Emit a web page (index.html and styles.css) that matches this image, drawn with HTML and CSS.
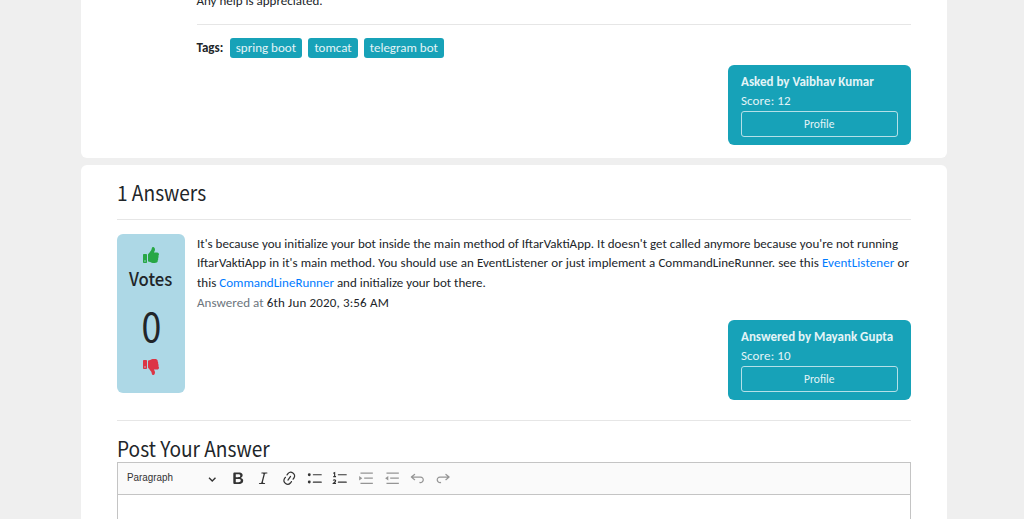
FILE: index.html
```
<!DOCTYPE html>
<html lang="en">
<head>
<meta charset="utf-8">
<title>Question</title>
<link rel="stylesheet" href="styles.css">
</head>
<body>
<main class="page">
  <section class="card question">
    <p class="text clip"><span class="l0">Any help is appreciated.</span></p>
    <hr class="rule">
    <div class="tags"><b class="tags-label">Tags:</b><span class="tag t1">spring boot</span><span class="tag t2">tomcat</span><span class="tag t3">telegram bot</span></div>
    <div class="user">
      <b class="n1">Asked by Vaibhav Kumar</b>
      <span class="score">Score: 12</span>
      <a class="profile">Profile</a>
    </div>
  </section>
  <section class="card answers">
    <h2 class="heading">1 Answers</h2>
    <hr class="rule">
    <div class="answer">
      <div class="votes">
        <svg class="thumb up" viewBox="0 0 512 512"><path d="M104 224H24c-13.255 0-24 10.745-24 24v240c0 13.255 10.745 24 24 24h80c13.255 0 24-10.745 24-24V248c0-13.255-10.745-24-24-24zM64 472c-13.255 0-24-10.745-24-24s10.745-24 24-24 24 10.745 24 24-10.745 24-24 24zM384 81.452c0 42.416-25.97 66.208-33.277 94.548h101.723c33.397 0 59.397 27.746 59.553 58.098.084 17.938-7.546 37.249-19.439 49.197l-.11.11c9.836 23.337 8.237 56.037-9.308 79.469 8.681 25.895-.069 57.704-16.382 74.757 4.298 17.598 2.244 32.575-6.148 44.632C440.202 511.587 389.616 512 346.839 512l-2.845-.001c-48.287-.017-87.806-17.598-119.56-31.725-15.957-7.099-36.821-15.887-52.651-16.178-6.54-.12-11.783-5.457-11.783-11.998v-213.77c0-3.2 1.282-6.271 3.558-8.521 39.614-39.144 56.648-80.587 89.117-113.111 14.804-14.832 20.188-37.236 25.393-58.902C282.515 39.293 291.817 0 312 0c24 0 72 8 72 81.452z"/></svg>
        <span class="votes-label">Votes</span>
        <span class="count">0</span>
        <svg class="thumb down" viewBox="0 0 512 512"><path d="M0 56v240c0 13.255 10.745 24 24 24h80c13.255 0 24-10.745 24-24V56c0-13.255-10.745-24-24-24H24C10.745 32 0 42.745 0 56zm40 200c0-13.255 10.745-24 24-24s24 10.745 24 24-10.745 24-24 24-24-10.745-24-24z"/><path transform="matrix(1 0 0 -1 0 512)" d="M384 81.452c0 42.416-25.97 66.208-33.277 94.548h101.723c33.397 0 59.397 27.746 59.553 58.098.084 17.938-7.546 37.249-19.439 49.197l-.11.11c9.836 23.337 8.237 56.037-9.308 79.469 8.681 25.895-.069 57.704-16.382 74.757 4.298 17.598 2.244 32.575-6.148 44.632C440.202 511.587 389.616 512 346.839 512l-2.845-.001c-48.287-.017-87.806-17.598-119.56-31.725-15.957-7.099-36.821-15.887-52.651-16.178-6.54-.12-11.783-5.457-11.783-11.998v-213.77c0-3.2 1.282-6.271 3.558-8.521 39.614-39.144 56.648-80.587 89.117-113.111 14.804-14.832 20.188-37.236 25.393-58.902C282.515 39.293 291.817 0 312 0c24 0 72 8 72 81.452z"/></svg>
      </div>
      <div class="body">
        <p class="text"><span class="l1">It's because you initialize your bot inside the main method of IftarVaktiApp. It doesn't get called anymore because you're not running</span><br><span class="l2">IftarVaktiApp in it's main method. You should use an EventListener or just implement a CommandLineRunner. see this <a class="link wide">EventListener</a> or</span><br><span class="l3">this <a class="link">CommandLineRunner</a> and initialize your bot there.</span><br><span class="l4"><span class="muted">Answered at</span> 6th Jun 2020, 3:56 AM</span></p>
        <div class="user">
          <b class="n2">Answered by Mayank Gupta</b>
          <span class="score">Score: 10</span>
          <a class="profile">Profile</a>
        </div>
      </div>
    </div>
    <hr class="rule">
    <h2 class="heading post">Post Your Answer</h2>
    <div class="editor">
      <div class="toolbar">
        <div class="dropdown"><span class="dropdown-label">Paragraph</span><svg class="chevron" viewBox="0 0 10 10"><path d="M1.2 3.2 5 7l3.8-3.8"/></svg></div>
        <svg class="tool" viewBox="0 0 20 20"><path d="M10.187 17H5.773c-.637 0-1.092-.138-1.364-.415-.273-.277-.409-.718-.409-1.323V4.738c0-.617.14-1.062.419-1.332.279-.27.73-.406 1.354-.406h4.68c.69 0 1.288.041 1.793.124.506.083.96.242 1.36.477.341.197.644.447.906.75a3.262 3.262 0 0 1 .808 2.162c0 1.401-.722 2.426-2.167 3.075C15.05 10.175 16 11.315 16 13.01a3.756 3.756 0 0 1-2.296 3.504 6.1 6.1 0 0 1-1.517.377c-.571.073-1.238.11-2 .11zm-.217-6.217H7v4.087h3.069c1.977 0 2.965-.69 2.965-2.072 0-.707-.256-1.22-.768-1.537-.512-.319-1.277-.478-2.296-.478zM7 5.13v3.619h2.606c.729 0 1.292-.067 1.69-.2a1.6 1.6 0 0 0 .91-.765c.165-.267.247-.566.247-.897 0-.707-.26-1.176-.778-1.409-.519-.232-1.31-.348-2.375-.348H7z"/></svg>
        <svg class="tool" viewBox="0 0 20 20"><path d="M9.586 14.633l.021.004c-.036.335.095.655.393.962.082.083.173.15.274.201h1.474a.6.6 0 1 1 0 1.2H5.304a.6.6 0 0 1 0-1.2h1.15c.474-.07.809-.182 1.005-.334.157-.122.291-.32.404-.597l2.416-9.55a1.053 1.053 0 0 0-.281-.823 1.12 1.12 0 0 0-.442-.296H8.15a.6.6 0 0 1 0-1.2h6.443a.6.6 0 1 1 0 1.2h-1.195c-.376.056-.65.155-.823.296-.215.175-.423.439-.623.79l-2.366 9.347z"/></svg>
        <svg class="tool" viewBox="0 0 20 20"><path d="M11.077 15l.991-1.416a.75.75 0 1 1 1.229.86l-1.148 1.64a.748.748 0 0 1-.217.206 5.251 5.251 0 0 1-8.503-5.955.741.741 0 0 1 .12-.274l1.147-1.639a.75.75 0 1 1 1.228.86L4.933 10.7l.006.003a3.75 3.75 0 0 0 6.132 4.294l.006.004zm5.494-5.335a.748.748 0 0 1-.12.274l-1.147 1.639a.75.75 0 1 1-1.228-.86l.86-1.23a3.75 3.75 0 0 0-6.144-4.301l-.86 1.229a.75.75 0 0 1-1.229-.86l1.148-1.64a.748.748 0 0 1 .217-.206 5.251 5.251 0 0 1 8.503 5.955zm-4.563-2.532a.75.75 0 0 1 .184 1.045l-3.155 4.505a.75.75 0 1 1-1.229-.86l3.155-4.506a.75.75 0 0 1 1.045-.184z"/></svg>
        <svg class="tool" viewBox="0 0 20 20"><circle cx="2.75" cy="5.75" r="1.75"/><circle cx="2.75" cy="14.5" r="1.75"/><rect x="7" y="5" width="11" height="1.5" rx=".75"/><rect x="7" y="14" width="11" height="1.5" rx=".75"/></svg>
        <svg class="tool" viewBox="0 0 20 20"><rect x="7" y="5" width="11" height="1.5" rx=".75"/><rect x="7" y="14" width="11" height="1.5" rx=".75"/><path class="stroke" d="M1.7 4.1 3.2 3.3V8M1.5 8h3.4M1.5 12.8C2 11.6 4.4 11.5 4.4 13c0 1.2-1.5 1.8-2.7 3.3h3.2"/></svg>
        <svg class="tool off" viewBox="0 0 20 20"><path d="M3 3h15v1.5H3zM7.5 9.2H18v1.5H7.5zM3 15.5h15V17H3zM1.4 7.2 5.2 10l-3.8 2.8z"/></svg>
        <svg class="tool off" viewBox="0 0 20 20"><path d="M3 3h15v1.5H3zM7.5 9.2H18v1.5H7.5zM3 15.5h15V17H3zM5.2 7.2 1.4 10l3.8 2.8z"/></svg>
        <svg class="tool off" viewBox="0 0 20 20"><path d="M5.042 9.367l2.189 1.837a.75.75 0 0 1-.965 1.149l-3.788-3.18a.747.747 0 0 1-.21-.284.75.75 0 0 1 .17-.945L6.23 4.762a.75.75 0 1 1 .964 1.15L4.863 7.866h8.917A.75.75 0 0 1 14 7.9a4 4 0 1 1-1.477 7.718l.344-1.489a2.5 2.5 0 1 0 1.094-4.73l.008-.032H5.042z"/></svg>
        <svg class="tool off" viewBox="0 0 20 20"><path transform="matrix(-1 0 0 1 20 0)" d="M5.042 9.367l2.189 1.837a.75.75 0 0 1-.965 1.149l-3.788-3.18a.747.747 0 0 1-.21-.284.75.75 0 0 1 .17-.945L6.23 4.762a.75.75 0 1 1 .964 1.15L4.863 7.866h8.917A.75.75 0 0 1 14 7.9a4 4 0 1 1-1.477 7.718l.344-1.489a2.5 2.5 0 1 0 1.094-4.73l.008-.032H5.042z"/></svg>
      </div>
    </div>
  </section>
</main>
</body>
</html>
```
FILE: styles.css
```
* { box-sizing: border-box; }
body { margin: 0; height: 519px; overflow: hidden; background: #efefef; color: #212529; font: 13px/19.8px Carlito, Lato, sans-serif; }
.page { width: 866.5px; margin-left: 80.5px; display: flex; flex-direction: column; gap: 7px; }
.card { background: #fff; padding: 0 36.5px; border-radius: 6px; }
.question { height: 157.6px; border-radius: 0 0 6px 6px; padding-left: 116px; overflow: hidden; display: flex; flex-direction: column; }
.answers { height: 354.4px; border-radius: 6px 6px 0 0; }
.text { margin: 0; white-space: nowrap; }
.clip { height: 24px; margin-top: -9.5px; margin-bottom: 9.5px; }
.rule { width: 100%; height: 1px; border: 0; margin: 0; background: #e6e6e6; flex: none; }
.tags { display: flex; height: 20px; margin-top: 13px; white-space: nowrap; }
.tags-label { width: 33px; }
.tag { height: 19.5px; margin-right: 6px; border-radius: 3px; background: #17a2b8; color: #e3f4f7; text-align: center; }
.t1 { width: 72.8px; }
.t2 { width: 49.5px; }
.t3 { width: 80px; }
.user { width: 182.5px; height: 80px; margin: 6.6px 0 0 auto; padding: 7px 13px; border-radius: 6px; background: #17a2b8; color: #e3f4f7; display: flex; flex-direction: column; white-space: nowrap; }
.score { letter-spacing: .12px; line-height: 19.8px; }
.profile { height: 26px; border: 1px solid #b5e0e8; border-radius: 3px; text-align: center; font-size: 11.5px; line-height: 24px; }
.heading { width: max-content; margin: 0; padding-top: 11px; height: 54.2px; font: 400 20.8px/32px "Noto Sans CJK JP", sans-serif; white-space: nowrap; transform: scaleX(.918); transform-origin: 0 0; }
.answer { display: flex; gap: 12px; margin-top: 13.9px; height: 186.2px; }
.votes { width: 68px; height: 159px; padding-top: 13.4px; border-radius: 6px; background: #add8e6; display: flex; flex-direction: column; align-items: center; font-family: "Noto Sans CJK JP", sans-serif; }
.thumb { width: 16px; height: 16px; flex: none; }
.up { fill: #28a745; }
.down { fill: #dc3545; }
.votes-label { font-size: 18.2px; line-height: 28px; padding-top: 1px; font-weight: 500; transform: scaleX(.92); }
.count { font-size: 41px; line-height: 60px; padding: 2px 0 5px; font-weight: 400; transform: scaleX(.87); }
.body { flex: 1; }
.l1 { word-spacing: .08px; }
.l2 { word-spacing: .23px; }
.wide { letter-spacing: .1px; }
.l4 { letter-spacing: .16px; }
.body .user { margin-top: 6.8px; }
.link { color: #007bff; }
.muted { color: #6c757d; letter-spacing: .05px; }
.post { padding-top: 11px; height: 41px; }
.editor { height: 57px; border: 1px solid #c4c4c4; border-bottom: 0; }
.toolbar { height: 32px; display: flex; align-items: center; gap: 9.2px; padding-left: 9.4px; background: #fafafa; border-bottom: 1px solid #c4c4c4; }
.dropdown { width: 93px; display: flex; justify-content: space-between; align-items: center; font: 10.7px/20px "Liberation Sans", sans-serif; color: #333; }
.dropdown-label { transform: scaleX(.92); transform-origin: 0 0; margin-top: -2px; }
.chevron { width: 8.5px; height: 8.5px; margin: 1px 3.5px 0 0; fill: none; stroke: #333; stroke-width: 1.6; }
.tool { width: 16.5px; height: 16.5px; flex: none; fill: #333; }
.off { opacity: .5; }
.stroke { fill: none; stroke: #333; stroke-width: 1.4; }
```
